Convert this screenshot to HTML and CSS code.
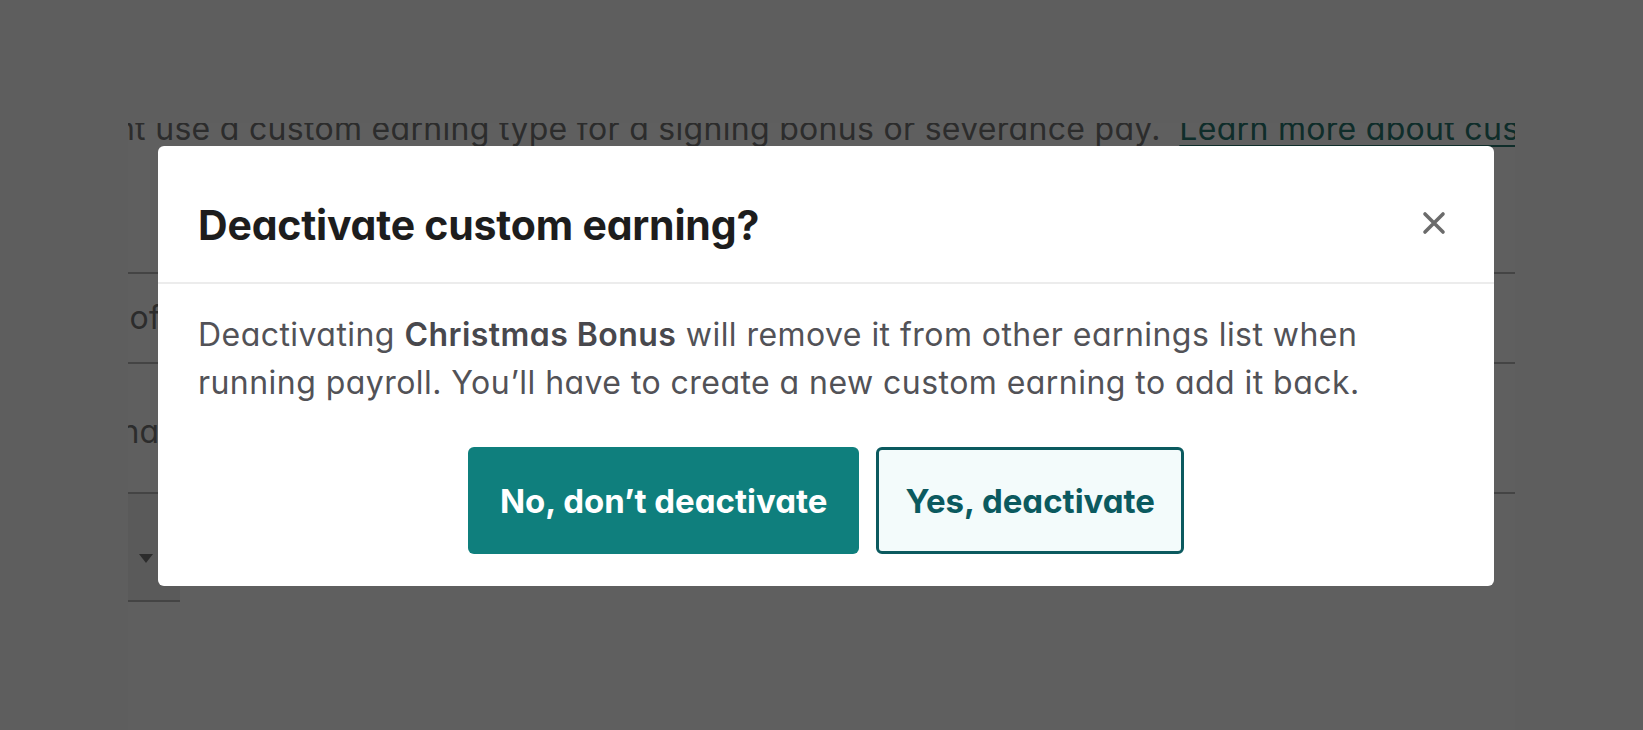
FILE: index.html
```html
<!DOCTYPE html>
<html lang="en">
<head>
<meta charset="utf-8">
<title>Deactivate custom earning</title>
<link rel="stylesheet" href="styles.css">
</head>
<body>
<div class="viewport">
  <div class="content">
    <p class="intro">You might use a custom earning type for a signing bonus or severance pay. &nbsp;<a class="intro-link" href="#">Learn more about custom earnings</a></p>
    <div class="row row-first"><span class="row-label">Type of earning</span></div>
    <div class="row row-second"><span class="row-label">Item name</span></div>
    <div class="row row-third">
      <div class="select"><span class="caret"></span></div>
    </div>
  </div>
</div>

<div class="overlay">
  <div class="modal" role="dialog" aria-modal="true" aria-labelledby="modal-title">
    <div class="modal-header">
      <h2 class="modal-title" id="modal-title">Deactivate custom earning?</h2>
      <button class="close-btn" type="button" aria-label="Close">
        <svg width="24" height="24" viewBox="0 0 24 24" aria-hidden="true"><path d="M3 3 L21 21 M21 3 L3 21" stroke="#6b6b6b" stroke-width="3.6" stroke-linecap="round" fill="none"/></svg>
      </button>
    </div>
    <div class="modal-body">
      <p class="modal-text">Deactivating <strong>Christmas Bonus</strong> will remove it from other earnings list when<br>running payroll. You’ll have to create a new custom earning to add it back.</p>
      <div class="modal-actions">
        <button class="btn btn-primary" type="button">No, don’t deactivate</button>
        <button class="btn btn-secondary" type="button">Yes, deactivate</button>
      </div>
    </div>
  </div>
</div>
</body>
</html>
```

FILE: styles.css
```css
* { box-sizing: border-box; }

html, body {
  margin: 0;
  padding: 0;
  height: 100%;
}

body {
  background: #fcfcfc;
  font-family: Inter, "Noto Sans", "Liberation Sans", sans-serif;
  font-feature-settings: "cv11" 1;
  overflow: hidden;
}

/* ---------- underlying page ---------- */
.viewport {
  margin: 123px 0 0 128px;
  width: 1387px;
  height: 607px;
  overflow: hidden;
  background: #ffffff;
}

.content {
  margin: -14px 0 0 -84px;
}

.intro {
  margin: 0 0 123px -52px;
  font-size: 32px;
  line-height: 40px;
  letter-spacing: 0.3px;
  color: #777777;
  white-space: nowrap;
}

.intro-link {
  color: #2a7872;
  text-decoration: underline;
  text-decoration-thickness: 2px;
  text-underline-offset: 5px;
}

.row {
  border-top: 2px solid #b7b7b7;
  display: flex;
  align-items: center;
}

.row-first { height: 90px; }

.row-second {
  height: 130px;
  align-items: flex-end;
  padding-bottom: 40px;
}

.row-third {
  height: 200px;
  align-items: flex-start;
}

.row-label {
  font-size: 32px;
  line-height: 40px;
  letter-spacing: 0.3px;
  color: #777777;
  white-space: nowrap;
}

.select {
  width: 136px;
  height: 108px;
  background: #f0f0f0;
  border-bottom: 2px solid #b7b7b7;
  display: flex;
  justify-content: flex-end;
  padding: 60px 27px 0 0;
}

.caret {
  width: 0;
  height: 0;
  border-left: 7px solid transparent;
  border-right: 7px solid transparent;
  border-top: 9px solid #777777;
}

/* ---------- overlay + modal ---------- */
.overlay {
  position: fixed;
  inset: 0;
  background: rgba(0, 0, 0, 0.627);
  display: flex;
  justify-content: center;
  align-items: flex-start;
  padding: 146px 0 0 9px;
}

.modal {
  width: 1336px;
  background: #ffffff;
  border-radius: 6px;
}

.modal-header {
  display: flex;
  align-items: center;
  justify-content: space-between;
  padding: 51px 40px 29px 40px;
  border-bottom: 2px solid #ececec;
}

.modal-title {
  margin: 0;
  font-size: 41px;
  line-height: 56px;
  font-weight: 700;
  color: #1d1d1d;
  letter-spacing: -0.2px;
}

.close-btn {
  width: 40px;
  height: 40px;
  margin-bottom: 4px;
  padding: 0;
  border: 0;
  background: transparent;
  display: flex;
  align-items: center;
  justify-content: center;
  cursor: pointer;
}

.modal-body {
  padding: 27px 40px 32px 40px;
}

.modal-text {
  margin: 0;
  font-size: 32px;
  line-height: 48px;
  letter-spacing: 0.45px;
  color: #525257;
}

.modal-text strong {
  font-weight: 600;
  color: #48484d;
}

.modal-actions {
  margin-top: 40px;
  display: flex;
  justify-content: center;
  gap: 17px;
}

.btn {
  height: 107px;
  border-radius: 6px;
  font-family: inherit;
  font-feature-settings: "cv11" 1;
  font-size: 33px;
  font-weight: 700;
  cursor: pointer;
}

.btn-primary {
  padding: 0 32px;
  background: #0f7f7d;
  color: #ffffff;
  border: 0;
}

.btn-secondary {
  padding: 0 26px;
  background: #f3fbfb;
  color: #0b5a5f;
  border: 3px solid #0b5a5f;
}
```
